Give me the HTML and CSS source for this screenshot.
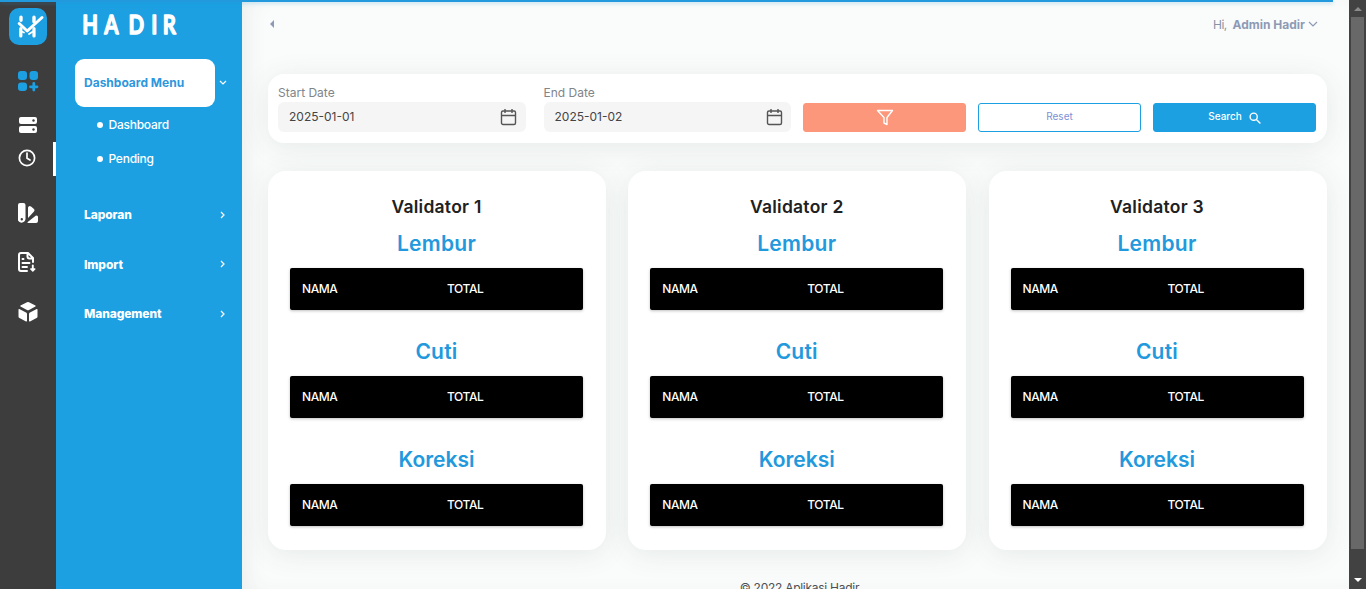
FILE: index.html
```html
<!DOCTYPE html>
<html lang="id">
<head>
<meta charset="utf-8">
<title>Hadir</title>
<link rel="stylesheet" href="styles.css">
</head>
<body>
<div class="progress"></div>
<div class="app">
  <aside class="rail">
    <svg class="logo" viewBox="0 0 38 37"><rect width="38" height="37" rx="10" fill="#1ca0e2"/><g fill="none" stroke="#fff" stroke-linecap="round" stroke-linejoin="round"><path d="M12 9.300v3M25 9.300v4.500" stroke-width="3.4"/><path d="M10.200 15.500l8 7.500L33 9.500" stroke-width="3"/><path d="M11.800 20.500v7.500M25 20.500v7.500" stroke-width="3.2"/><path d="M12.500 23.500l2.500 1M24 23.500l-4 2.500" stroke-width="1.800"/></g></svg>
    <div class="rail-item item-grid"><svg width="22" height="22" viewBox="0 0 22 22" fill="#1ca0e2"><rect x="1" y="1" width="9" height="9" rx="3"/><rect x="12.500" y="1" width="8.500" height="9" rx="3"/><rect x="1" y="12.500" width="9" height="8.500" rx="3"/><path d="M16.800 13.500v6.500M13.500 16.800h6.500" stroke="#1ca0e2" stroke-width="2.800" stroke-linecap="round"/></svg></div>
    <div class="rail-item item-server"><svg width="20" height="18" viewBox="0 0 20 18"><rect x="1" y="1" width="18" height="7" rx="2" fill="#fff"/><rect x="1" y="10" width="18" height="7" rx="2" fill="#fff"/><circle cx="15.500" cy="4.500" r="1.200" fill="#3d3d3d"/><circle cx="15.500" cy="13.500" r="1.200" fill="#3d3d3d"/></svg></div>
    <div class="rail-item item-clock"><svg width="20" height="20" viewBox="0 0 20 20" fill="none" stroke="#fff" stroke-width="1.700" stroke-linecap="round" stroke-linejoin="round"><circle cx="10" cy="10" r="7.600"/><path d="M10 5v5.300l3 1.700"/></svg></div>
    <div class="rail-item item-swatch"><svg width="22" height="22" viewBox="0 0 22 22" fill="#fff"><path fill-rule="evenodd" d="M3 1h3.500a2 2 0 012 2v14a4 4 0 01-7.500 1.500V3a2 2 0 012-2zM4.800 16a1.200 1.200 0 100 2.400 1.200 1.200 0 000-2.400z"/><path d="M11 5.500a2 2 0 013-1l3 2.500a2 2 0 010 2.600L11 16zM19 13.500l1.300.3q.7.400.7 1.200v4q0 2-2 2h-8q-1 0-.3-1z"/></svg></div>
    <div class="rail-item item-doc"><svg width="20" height="22" viewBox="0 0 20 22" fill="none" stroke="#fff" stroke-width="2" stroke-linecap="round" stroke-linejoin="round"><path d="M10 20H4q-2 0-2-2V4q0-2 2-2h7l5 5v4M10.500 2v3.500q0 2 2 2H16"/><path d="M5.500 8h1M5.500 12h7M5.500 16h4.500" stroke-width="1.900"/><path d="M15.800 14.500v4" stroke-width="1.900"/><path d="M13.800 18h4l-2 2z" stroke-width="1.400" fill="#fff"/></svg></div>
    <div class="rail-item item-cube"><svg width="22" height="22" viewBox="0 0 22 22" fill="#fff"><path d="M10 1.300q1-.6 2 0l6.400 3.200q.7.500 0 1L12 9q-1 .5-2 0L3.500 5.500q-.6-.5 0-1zM1.500 8.500q0-.8.800-.5L9 11.600q1 .4 1 1.600v6.600q0 1-1 .6l-6.500-3.400q-1-.5-1-1.500zM20.500 8.500q0-.8-.8-.5L13 11.600q-1 .4-1 1.600v6.600q0 1 1 .6l6.500-3.400q1-.5 1-1.500z"/></svg></div>
  </aside>
  <nav class="menu">
    <svg class="wordmark" width="110" height="36"><text transform="scale(.76 1)" x="5.500 34.500 66.500 96.500 111.500" y="27">HADIR</text></svg>
    <div class="menu-head"><span class="menu-active"><span class="t-active">Dashboard Menu</span></span><svg class="head-arrow" width="8" height="6" viewBox="0 0 8 6"><path d="M1 1l3 3 3-3"/></svg></div>
    <a class="sub first"><i></i><span>Dashboard</span></a>
    <a class="sub second"><i></i><span>Pending</span></a>
    <a class="group laporan"><span>Laporan</span><svg width="6" height="8" viewBox="0 0 6 8"><path d="M1 1l3 3-3 3"/></svg></a>
    <a class="group"><span>Import</span><svg width="6" height="8" viewBox="0 0 6 8"><path d="M1 1l3 3-3 3"/></svg></a>
    <a class="group"><span>Management</span><svg width="6" height="8" viewBox="0 0 6 8"><path d="M1 1l3 3-3 3"/></svg></a>
  </nav>
  <main class="content">
    <header class="topbar">
      <svg width="4" height="8" viewBox="0 0 4 8"><path d="M4 0v8L0 4z" fill="#8e9ab5"/></svg>
      <div class="user"><span class="hi">Hi,</span><b>Admin Hadir</b><svg width="10" height="6" viewBox="0 0 10 6" fill="none" stroke="#8e9ab5" stroke-width="1.200"><path d="M1 1l4 4 4-4"/></svg></div>
    </header>
    <section class="filters">
      <label class="field"><span class="label l-start">Start Date</span><span class="input"><span class="date">2025-01-01</span><svg width="18" height="18" viewBox="0 0 18 18" fill="none" stroke="#555" stroke-width="1.400"><rect x="1.500" y="3" width="14" height="13.500" rx="1.500"/><path d="M1.500 7.500h14M5 1v4M12 1v4"/></svg></span></label>
      <label class="field"><span class="label l-end">End Date</span><span class="input"><span class="date d-end">2025-01-02</span><svg width="18" height="18" viewBox="0 0 18 18" fill="none" stroke="#555" stroke-width="1.400"><rect x="1.500" y="3" width="14" height="13.500" rx="1.500"/><path d="M1.500 7.500h14M5 1v4M12 1v4"/></svg></span></label>
      <button class="btn filter"><svg width="18" height="17" viewBox="0 0 18 17" fill="none" stroke="#fff" stroke-width="1.400" stroke-linejoin="round"><path d="M1.500 1.500h15l-5.500 7v7l-3-1.500V8.500z"/></svg></button>
      <button class="btn reset"><span>Reset</span></button>
      <button class="btn search"><span>Search</span><svg width="12" height="12" viewBox="0 0 12 12" fill="none" stroke="#fff" stroke-width="1.400"><circle cx="4.700" cy="4.700" r="3.600"/><path d="M7.400 7.400l4 4"/></svg></button>
    </section>
    <section class="cards">
      <article class="card">
        <h2>Validator 1</h2>
        <h3 class="lembur">Lembur</h3><div class="thead"><span>NAMA</span><span>TOTAL</span></div>
        <h3 class="cuti">Cuti</h3><div class="thead"><span>NAMA</span><span>TOTAL</span></div>
        <h3 class="koreksi">Koreksi</h3><div class="thead"><span>NAMA</span><span>TOTAL</span></div>
      </article>
      <article class="card">
        <h2>Validator 2</h2>
        <h3 class="lembur">Lembur</h3><div class="thead"><span>NAMA</span><span>TOTAL</span></div>
        <h3 class="cuti">Cuti</h3><div class="thead"><span>NAMA</span><span>TOTAL</span></div>
        <h3 class="koreksi">Koreksi</h3><div class="thead"><span>NAMA</span><span>TOTAL</span></div>
      </article>
      <article class="card">
        <h2>Validator 3</h2>
        <h3 class="lembur">Lembur</h3><div class="thead"><span>NAMA</span><span>TOTAL</span></div>
        <h3 class="cuti">Cuti</h3><div class="thead"><span>NAMA</span><span>TOTAL</span></div>
        <h3 class="koreksi">Koreksi</h3><div class="thead"><span>NAMA</span><span>TOTAL</span></div>
      </article>
    </section>
    <footer>© 2022 Aplikasi Hadir</footer>
  </main>
  <div class="scrollbar">
    <svg width="8" height="4" viewBox="0 0 8 4"><path d="M4 0l4 4H0z" fill="#8b8b8b"/></svg>
    <div class="thumb"></div>
    <svg width="8" height="4" viewBox="0 0 8 4"><path d="M0 0h8L4 4z" fill="#fff"/></svg>
  </div>
</div>
</body>
</html>
```
FILE: styles.css
```css
* { box-sizing: border-box; }
body { margin: 0; height: 589px; overflow: hidden; font-family: Inter, "Liberation Sans", sans-serif; font-size: 12px; }
svg { display: block; flex: none; }
.progress { position: absolute; z-index: 5; top: 0; left: 0; width: 1333px; height: 2px; background: #2299dd; box-shadow: 0 1px 4px rgba(34,153,221,.4); }
.app { display: flex; height: 589px; }

.rail { width: 56px; background: #3d3d3d; padding-top: 8px; flex: none; }
.logo { width: 38px; height: 37px; margin-left: 9px; }
.rail-item { display: flex; align-items: center; justify-content: center; }
.item-grid { height: 72px; }
.item-server { height: 16px; }
.item-clock { height: 34px; margin-top: 9px; border-right: 3px solid #fff; padding: 0 0 2px 1px; }
.item-swatch { height: 74px; }
.item-doc { height: 24px; padding-right: 2px; }
.item-cube { height: 76px; }

.menu { width: 186px; background: #1ca0e2; color: #fff; padding-top: 7px; flex: none; }
.wordmark { margin-left: 22px; overflow: visible; }
.wordmark text { font: 700 27px Lato, sans-serif; fill: #fff; stroke: #fff; stroke-width: 1.4; stroke-linejoin: round; }
.menu-head { display: flex; align-items: center; margin: 16px 0 0 19px; }
.menu-active { width: 140px; height: 48px; border-radius: 9px; background: #fff; color: #2e97dd; font-weight: 700; padding: 0 0 1px 9px; display: flex; align-items: center; }
.menu svg path { fill: none; stroke: #fff; stroke-width: 1.2; }
.head-arrow { margin-left: 4px; }
.sub { display: flex; align-items: center; gap: 5.5px; height: 34px; padding-left: 41px; font-weight: 500; letter-spacing: -.25px; }
.sub span { padding-bottom: 1px; }
.sub i { width: 6px; height: 6px; border-radius: 50%; background: #fff; }
.first { margin-top: 1px; }
.group { display: flex; align-items: center; justify-content: space-between; height: 49.5px; padding: 0 16px 0 28px; font-weight: 800; letter-spacing: -.1px; }
.laporan { margin-top: 14px; }

.content { flex: 1; min-width: 0; padding: 0 22px 0 26px; background: #fafcfb; box-shadow: inset 12px 0 24px -10px rgba(38,65,72,.09); overflow: hidden; }
.topbar { display: flex; align-items: center; justify-content: space-between; height: 48px; padding: 0 9px 0 2px; }
.user { display: flex; align-items: center; color: #8e9ab5; font-size: 12px; }
.hi { color: #8993a5; margin-right: 6px; letter-spacing: -.6px; }
.user svg { margin-left: 3px; }

.filters { display: flex; gap: 12px; align-items: flex-end; width: 1059px; height: 69px; margin-top: 26px; padding: 0 11px 11px 10px; border-radius: 16px; background: #fff; box-shadow: 0 4px 28px rgba(38,65,72,.1); }
.field { width: 248px; color: #80858a; }
.field + .field { margin-left: 5.5px; width: 247.5px; }
.label { display: block; height: 18px; line-height: 18px; width: max-content; }
.input { display: flex; align-items: center; justify-content: space-between; height: 30px; padding: 0 8px 0 11px; border-radius: 6px; background: #f5f5f5; color: #444; }
.field + .field .input { padding-right: 7px; }
.date { padding-bottom: 1px; }
.btn { display: flex; align-items: center; justify-content: center; gap: 7px; width: 163px; height: 29px; padding: 0; border: 1px solid #1ca0e2; border-radius: 3px; background: #1ca0e2; color: #fff; font: 500 10px Inter, sans-serif; }
.btn span { padding-bottom: 3px; }
.filter { background: #fc977b; border-color: #fc977b; }
.reset { background: #fff; color: #7d91d6; font-weight: 400; }

.cards { display: grid; grid-template-columns: repeat(3, 338px); justify-content: space-between; width: 1058.5px; margin-top: 28px; }
.card { height: 379px; border-radius: 18px; background: #fff; padding: 22px 23px 0 22px; box-shadow: 0 4px 28px rgba(38,65,72,.1); }
h2, h3 { margin: 0 auto; width: max-content; font-weight: 600; white-space: nowrap; }
h2 { height: 28px; line-height: 28px; font-size: 17.5px; letter-spacing: .25px; color: #212121; }
h3 { height: 30px; line-height: 32px; font-size: 21px; letter-spacing: .25px; color: #2299dd; margin-bottom: 10px; }
.koreksi { letter-spacing: 0; }
.lembur { margin-top: 7px; }
.cuti, .koreksi { margin-top: 26px; }
.thead { display: grid; grid-template-columns: 145px 1fr; align-items: center; height: 42px; padding: 0 0 1px 12px; border-radius: 2px; background: #000; color: #fff; font-weight: 500; letter-spacing: -.4px; box-shadow: 0 1px 3px rgba(0,0,0,.25); }
.thead span { width: max-content; }
footer { width: max-content; margin: 30px auto 0; transform: translateX(2px); line-height: 16px; letter-spacing: -.27px; color: #4c5054; }

.scrollbar { width: 17px; flex: none; background: #424242; padding: 7px 2px; display: flex; flex-direction: column; }
.scrollbar svg { margin-left: 2.500px; }
.thumb { height: 532px; margin: 6px 0 29px; width: 13px; background: #686868; }
```
